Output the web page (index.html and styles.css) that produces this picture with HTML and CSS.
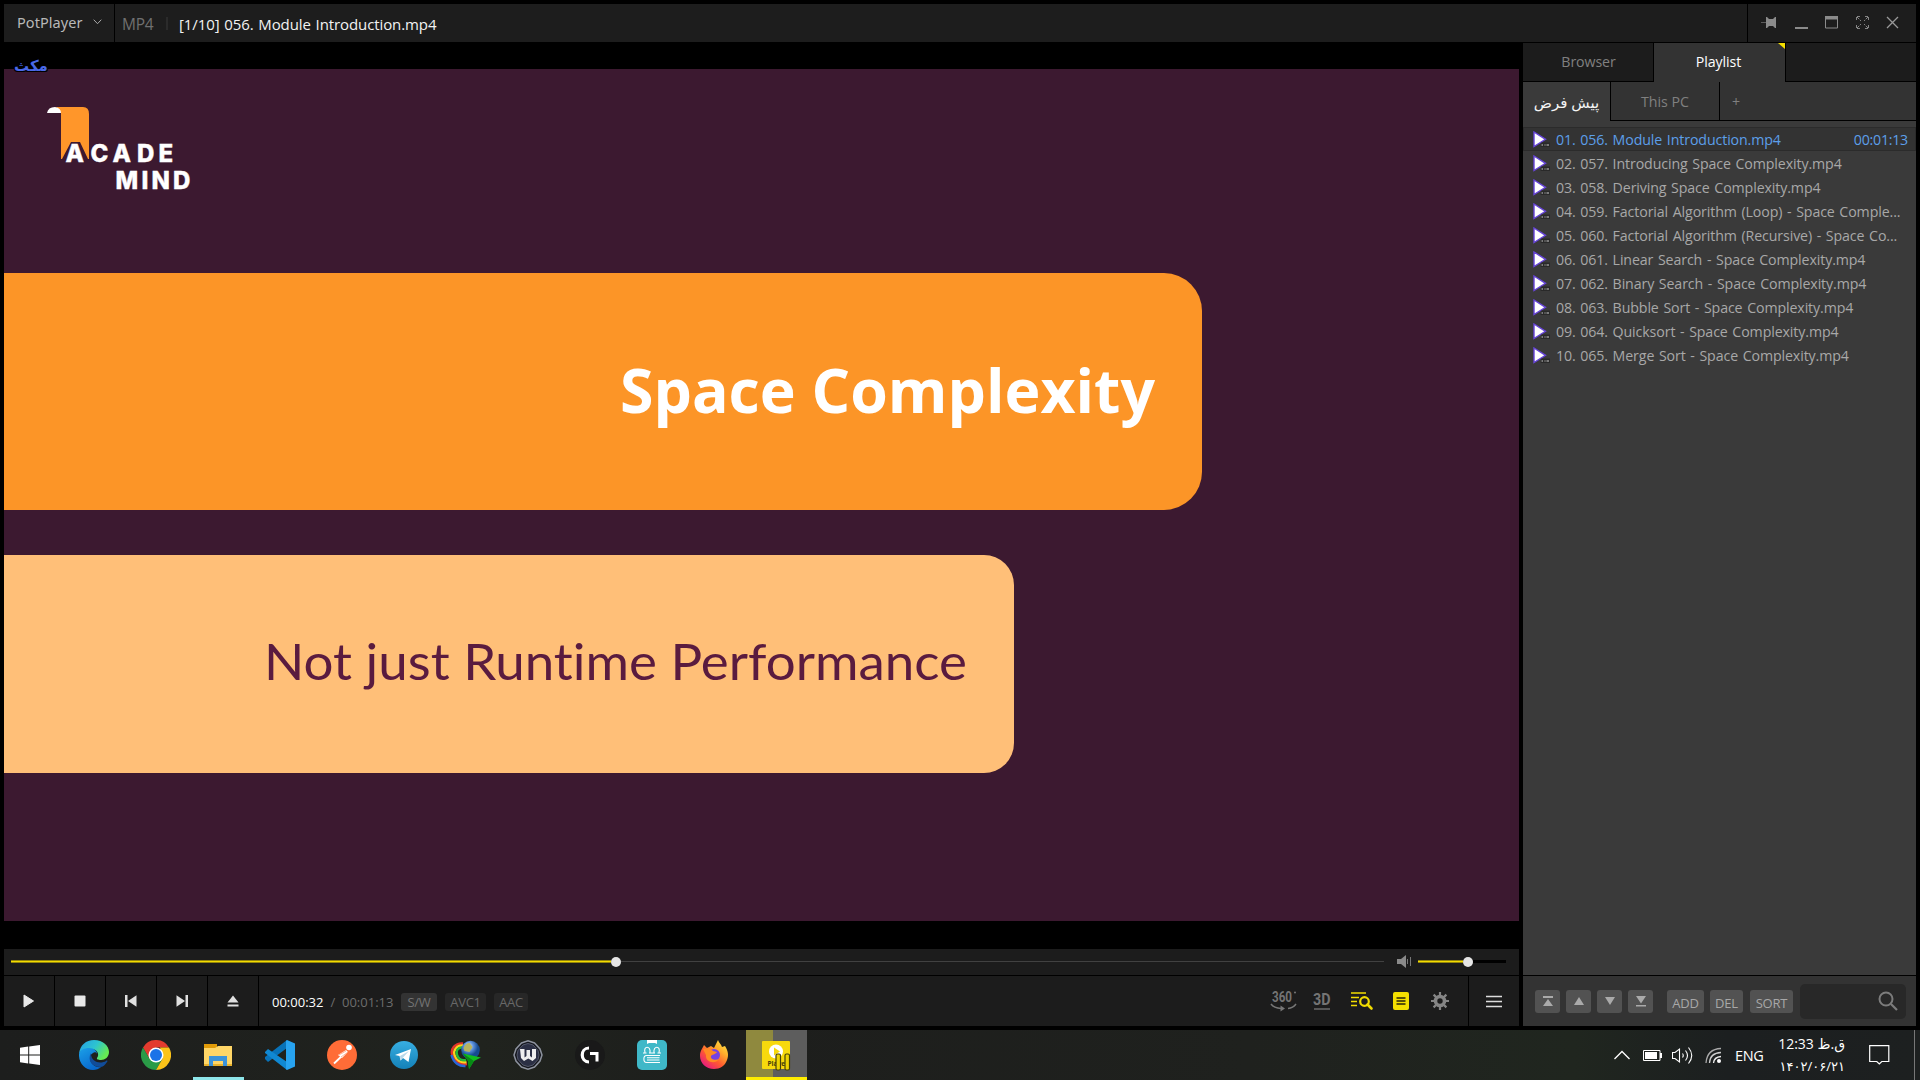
FILE: index.html
```html
<!DOCTYPE html>
<html lang="en">
<head>
<meta charset="utf-8">
<title>PotPlayer</title>
<link rel="stylesheet" href="styles.css">
</head>
<body>
<div class="player">
  <header class="titlebar">
    <div class="brand"><span class="brand-name">PotPlayer</span><svg width="9" height="6" viewBox="0 0 9 6"><path d="M.7.7l3.8 4 3.8-4" fill="none" stroke="#aaa"/></svg></div>
    <div class="filebar"><span class="format">MP4</span><i class="bar-sep"></i><span class="filename">[1/10] 056. Module Introduction.mp4</span></div>
    <div class="window-buttons">
      <svg width="16" height="13" viewBox="0 0 16 13"><path d="M0 6h6v1H0z" fill="#5c5c5c"/><path d="M5 1h1l2 2h4l2-2h1v11h-1l-2-2H8l-2 2H5z" fill="#8b8b8b"/></svg>
      <svg width="13" height="13" viewBox="0 0 13 13"><path d="M0 11h13v2H0z" fill="#8b8b8b"/></svg>
      <svg width="13" height="13" viewBox="0 0 13 13"><path d="M.5.5h12v11.500H.5z" fill="none" stroke="#8b8b8b"/><path d="M0 0h13v3.500H0z" fill="#8b8b8b"/></svg>
      <svg width="13" height="13" viewBox="0 0 13 13"><path d="M.5 4V.5H4M9 .5h3.500V4M12.500 9v3.500H9M4 12.500H.5V9M1 1l4 4M12 1L8 5M12 12L8 8M1 12l4-4" fill="none" stroke="#858585" stroke-dasharray="3 1"/></svg>
      <svg width="13" height="13" viewBox="0 0 13 13"><path d="M1 1l11 11M12 1L1 12" stroke="#999" stroke-width="1.300"/></svg>
    </div>
  </header>

  <main class="content">
    <section class="viewer">
      <div class="stage">
        <div class="slide">
          <svg class="logo" width="150" height="90" viewBox="44 104 150 90">
            <path d="M56 107h27q6 0 6 7v45h-1l-8-17h-9l-9 17h-1v-46z" fill="#ff962a"/>
            <path d="M47 113q1-6 8-6 6 1 6 6z" fill="#fff"/>
            <text class="logo-text" y="162" x="65.500 90.500 112.500 137 158.500">ACADE</text>
            <text class="logo-text" y="189" x="115.500 141.500 151.500 173">MIND</text>
          </svg>
          <div class="banner banner-main"><svg width="540" height="90"><text class="headline" x="1" y="60" textLength="535" lengthAdjust="spacingAndGlyphs">Space Complexity</text></svg></div>
          <div class="banner banner-sub"><svg width="704" height="80"><text class="subline" x="-2" y="54" textLength="703" lengthAdjust="spacingAndGlyphs">Not just Runtime Performance</text></svg></div>
        </div>
        <span class="osd" lang="fa">مکث</span>
      </div>
      <div class="seekbar">
        <div class="track seek"><i class="played"></i><i class="knob"></i><i class="rest"></i></div>
        <svg class="speaker" width="14" height="13" viewBox="0 0 14 13"><path d="M0 4h4l5-4v13L4 9H0z" fill="#8a8a8a"/><path d="M10.500 4v5M13.500 2v9" stroke="#777"/></svg>
        <div class="track volume"><i class="played"></i><i class="knob"></i><i class="rest"></i></div>
      </div>
      <div class="controls">
        <button class="key"><svg width="12" height="14" viewBox="0 0 12 14"><path d="M1 1l9.500 6L1 13z" fill="#e8e8e8" stroke="#e8e8e8" stroke-linejoin="round"/></svg></button>
        <button class="key"><svg width="12" height="12"><rect x=".5" y=".5" width="11" height="11" rx="1" fill="#e8e8e8"/></svg></button>
        <button class="key"><svg width="12" height="12" viewBox="0 0 12 12"><path d="M0 0h2.500v12H0zM11.500.3v11.400L3 6z" fill="#e0e0e0"/></svg></button>
        <button class="key"><svg width="12" height="12" viewBox="0 0 12 12"><path d="M9.500 0H12v12H9.500zM.5.3v11.400L9 6z" fill="#e0e0e0"/></svg></button>
        <button class="key"><svg width="12" height="12" viewBox="0 0 12 12"><path d="M6 .5L11.500 7.500H.5zM.5 9.500h11v2H.5z" fill="#e0e0e0"/></svg></button>
        <div class="status">
          <span class="now">00:00:32</span><span class="slash">/</span><span class="total">00:01:13</span>
          <span class="badge on">S/W</span><span class="badge avc">AVC1</span><span class="badge">AAC</span>
          <div class="tools">
            <svg width="28" height="22" viewBox="0 0 28 22"><text class="tool-text" x="2" y="12" textLength="20" lengthAdjust="spacingAndGlyphs">360</text><circle cx="25" cy="2.500" r="1" fill="#777"/><path d="M1 14q3 4 10 4.500M26 14q-3 4-8 4.500" fill="none" stroke="#777" stroke-width="1.500"/><path d="M10.500 15.500l4.500 3-4.500 3z" fill="#777"/></svg>
            <svg width="18" height="20" viewBox="0 0 18 20"><text class="tool-text big" x="0" y="13.500" textLength="17.500" lengthAdjust="spacingAndGlyphs">3D</text><path d="M1 18h16" stroke="#777" stroke-width="1.300"/></svg>
            <svg width="22" height="18" viewBox="0 0 22 18"><path d="M0 1h15M0 5.500h8M0 9.500h6M0 13.500h6" stroke="#f1dc00" stroke-width="1.400"/><circle cx="13.500" cy="9.500" r="4.300" fill="none" stroke="#f1dc00" stroke-width="2.200"/><path d="M16.500 12.500l4 4" stroke="#f1dc00" stroke-width="2.600" stroke-linecap="round"/></svg>
            <svg width="16" height="18" viewBox="0 0 16 18"><rect width="16" height="18" rx="2" fill="#f4df00"/><path d="M3.500 6h9M3.500 9h9M3.500 12h9" stroke="#27230a" stroke-width="1.400"/></svg>
            <svg width="18" height="18" viewBox="0 0 18 18"><g stroke="#858585"><path d="M9 0v18M0 9h18M2.600 2.600l12.800 12.800M15.400 2.600L2.600 15.400" stroke-width="2.200"/><circle cx="9" cy="9" r="4.500" fill="#1c1c1c" stroke-width="3.600"/></g></svg>
          </div>
        </div>
        <button class="menu"><svg width="16" height="13" viewBox="0 0 16 13"><path d="M0 1.500h16M0 6.500h16M0 11.500h16" stroke="#ddd" stroke-width="1.600"/></svg></button>
      </div>
    </section>

    <aside class="panel">
      <nav class="tabs"><a class="tab">Browser</a><a class="tab active">Playlist<i class="corner"></i></a><a class="tab empty"></a></nav>
      <nav class="lists"><a class="list-tab current" lang="fa">پیش فرض</a><a class="list-tab pc">This PC</a><a class="list-tab plus">+</a></nav>
      <svg class="defs" width="0" height="0"><symbol id="clip" viewBox="0 0 17 17"><path d="M1 1L12.500 8.300 1 15.500z" fill="#fff" stroke="#6644d8" stroke-width="1.400"/><path d="M8.500 11.500H17V16H7.500z" fill="#292929"/><path d="M8.500 14H10M11.500 14h1M13.500 14H16" stroke="#ccc"/></symbol></svg>
      <ul class="files">
        <li class="file playing"><svg><use href="#clip"/></svg><span>01. 056. Module Introduction.mp4</span><time>00:01:13</time></li>
        <li class="file"><svg><use href="#clip"/></svg><span>02. 057. Introducing Space Complexity.mp4</span></li>
        <li class="file"><svg><use href="#clip"/></svg><span>03. 058. Deriving Space Complexity.mp4</span></li>
        <li class="file"><svg><use href="#clip"/></svg><span>04. 059. Factorial Algorithm (Loop) - Space Comple...</span></li>
        <li class="file"><svg><use href="#clip"/></svg><span>05. 060. Factorial Algorithm (Recursive) - Space Co...</span></li>
        <li class="file"><svg><use href="#clip"/></svg><span>06. 061. Linear Search - Space Complexity.mp4</span></li>
        <li class="file"><svg><use href="#clip"/></svg><span>07. 062. Binary Search - Space Complexity.mp4</span></li>
        <li class="file"><svg><use href="#clip"/></svg><span>08. 063. Bubble Sort - Space Complexity.mp4</span></li>
        <li class="file"><svg><use href="#clip"/></svg><span>09. 064. Quicksort - Space Complexity.mp4</span></li>
        <li class="file"><svg><use href="#clip"/></svg><span>10. 065. Merge Sort - Space Complexity.mp4</span></li>
      </ul>
      <div class="panel-foot">
        <button class="mini"><svg width="10" height="11" viewBox="0 0 10 11"><path d="M0 0h10v2H0zM5 3l5 7H0z" fill="#aaa"/></svg></button>
        <button class="mini"><svg width="10" height="8" viewBox="0 0 10 8"><path d="M5 0l5 8H0z" fill="#aaa"/></svg></button>
        <button class="mini"><svg width="10" height="8" viewBox="0 0 10 8"><path d="M5 8l5-8H0z" fill="#aaa"/></svg></button>
        <button class="mini"><svg width="10" height="11" viewBox="0 0 10 11"><path d="M0 9h10v1.500H0zM5 7.500L10 0H0z" fill="#aaa"/></svg></button>
        <button class="word add">ADD</button><button class="word del">DEL</button><button class="word sort">SORT</button>
        <div class="search"><svg width="20" height="20" viewBox="0 0 20 20"><circle cx="8" cy="8" r="6.500" fill="none" stroke="#7c7c7c" stroke-width="2"/><path d="M13 13l6 6" stroke="#7c7c7c" stroke-width="2.200"/></svg></div>
      </div>
    </aside>
  </main>
</div>

<footer class="taskbar">
  <a class="start"><svg width="20" height="20" viewBox="0 0 20 20"><path d="M0 2.800L8.200 1.600v7.900H0zM9.200 1.500L20 0v9.500H9.200zM0 10.500h8.200v7.900L0 17.200zM9.200 10.500H20V20L9.200 18.500z" fill="#fff"/></svg></a>
  <a class="app"><svg width="30" height="30" viewBox="0 0 30 30"><defs><linearGradient id="e1" x1="0" y1="0" x2="1" y2=".5"><stop offset="0" stop-color="#249de6"/><stop offset=".55" stop-color="#2dc4d0"/><stop offset="1" stop-color="#66eb52"/></linearGradient><linearGradient id="e2" x1="0" y1="0" x2=".6" y2="1"><stop offset="0" stop-color="#1ba0e8"/><stop offset="1" stop-color="#0867cc"/></linearGradient></defs><path d="M0 14C1 5 7 0 15 0c9 0 15 6 15 12 0 5-4 8-8 8-3 0-5-1-4-2 3-4 0-9-6-9C6 9 1 11 0 14z" fill="url(#e1)"/><path d="M0 14c1-4 5-6 10-6 5 0 8 3 8 6-4-2-7 0-7 4 0 6 6 10 11 9-2 2-5 3-8 3C6 30-.5 23 0 14z" fill="url(#e2)"/><path d="M12 13c-4 7 1 14 9 14 3 0 5-2 7-5 1-1 0-2-1-1-5 3-15 2-15-8z" fill="#114c99"/><path d="M14 13c3-2 5 1 4 4-1 2 0 3 3 4-5 1-10-4-7-8z" fill="#20201d"/></svg></a>
  <a class="app"><svg width="30" height="30" viewBox="0 0 30 30"><path d="M2 7.500A15 15 0 0 1 28 7.500H15L8.500 19z" fill="#e33b2e"/><path d="M2 7.500a15 15 0 0 0 13 22.500l6.500-11.200H8.500z" fill="#2a9b47"/><path d="M28 7.500a15 15 0 0 1-13 22.500l6.500-11.200L19 7.500z" fill="#fcc419"/><circle cx="15" cy="15" r="7.500" fill="#fff"/><circle cx="15" cy="15" r="6" fill="#1a73e8"/></svg></a>
  <a class="app open"><svg width="28" height="24" viewBox="0 0 28 24"><path d="M0 1h13v5H0z" fill="#e19b08"/><path d="M0 5h11l3-2h14v20H0z" fill="#ffd667"/><path d="M0 21h28v2H0z" fill="#e9b22c"/><path d="M5 23V13h18v10h-4v-5H9v5z" fill="#3c93d9"/></svg></a>
  <a class="app"><svg width="30" height="30" viewBox="0 0 30 30"><path d="M22 0v8L3 22l-3-3v-2z" fill="#0872b8"/><path d="M0 12l3-3 19 13v8L0 13z" fill="#1088d2"/><path d="M22 0l8 3.500v23L22 30l-1-1V1z" fill="#27a3f0"/></svg></a>
  <a class="app"><svg width="30" height="30" viewBox="0 0 30 30"><circle cx="15" cy="15" r="15" fill="#ff6c37"/><circle cx="22" cy="7.500" r="2.800" fill="#fff"/><path d="M11 15l8-5 2 2-6 6z" fill="#fff"/><path d="M17 14L7 23.500" stroke="#fff" stroke-width="1.800"/><path d="M12 15l7-4M14 17l7-5" stroke="#ff6c37" stroke-width=".5"/></svg></a>
  <a class="app tele"><svg width="28" height="28" viewBox="0 0 28 28"><defs><linearGradient id="tg" x2="0" y2="1"><stop stop-color="#37aee2"/><stop offset="1" stop-color="#1481b8"/></linearGradient></defs><circle cx="14" cy="14" r="14" fill="url(#tg)"/><path d="M5 14L21 8l-2.500 13-5.500-4-2.500 2.500-1-4.500z" fill="#fff"/><path d="M10 15l9-5-6 6.500-2.500 3z" fill="#b9d9ea"/></svg></a>
  <a class="app"><svg width="32" height="30" viewBox="0 0 32 30"><defs><radialGradient id="globe" cx=".4" cy=".3"><stop stop-color="#e6f0ff"/><stop offset=".5" stop-color="#5d91dc"/><stop offset="1" stop-color="#164b91"/></radialGradient></defs><g fill="none" stroke-width="2.400"><path d="M13 3.500C5 3 0 9 2.500 15.500S10 25 17 24" stroke="#e3342b"/><path d="M13 5.500C7 5 3 10 4.500 15s6 8 12 7" stroke="#ffcf1d"/><path d="M1.500 15c2 8 8 11.500 14 11" stroke="#2967d6"/><path d="M12 7.500C8 7 5.500 11 7 15s5 6 9 5" stroke="#27b93a"/></g><circle cx="20.500" cy="10" r="9.300" fill="url(#globe)"/><path d="M13.500 8q2-5 6-5l3 4-3 5-5-1z" fill="#b7b45e"/><path d="M13 13.500l18 4-7 3.500-5 8-1-8z" fill="#12bd20"/><path d="M13 13.500l11 7.500-5 8-1-8z" fill="#078a15"/></svg></a>
  <a class="app"><svg width="30" height="30" viewBox="0 0 30 30"><path d="M8.500 3L15 .8 21.500 3 27 9l2 6-2 6-5.500 6-6.500 2.200L8.500 27 3 21l-2-6 2-6z" fill="#15171e" stroke="#8d929e" stroke-width="1.500"/><path d="M10 5l5-1.500L20 5l5 5.500 1 4.500-1 4.500-5 5.500-5 1.500-5-1.500-5-5.500L4 15l1-4.500z" fill="#2b2f44" stroke="#54596b"/><path d="M7 9h4.500v8.500l2-1.500v-6H17v6l2 1.500V9h4v9l-3.500 3-4.200-2.500-4.300 2.500-3-3z" fill="#eee"/></svg></a>
  <a class="app"><svg width="30" height="30" viewBox="0 0 30 30"><circle cx="15" cy="15" r="15" fill="#191919"/><path d="M14 8c-9 0-9 14 0 14" fill="none" stroke="#fff" stroke-width="3.200"/><path d="M15 13.500h7v8" fill="none" stroke="#fff" stroke-width="3"/></svg></a>
  <a class="app"><svg width="30" height="30" viewBox="0 0 30 30"><rect width="30" height="30" rx="5" fill="#3fb8c8"/><path d="M10 0h10v4l-2-1h-6l-2 1z" fill="#fff"/><g fill="none" stroke="#fff" stroke-width="1.100"><path d="M8 12.500c-2-7 6-7 5 0M17 12.500c-1-7 7-7 5 0M6 13h3.500M12 13h6M20.500 13H24M23 15.500H9.500c-3.500 0-3.500 7 0 7H23M22.500 17.800H10M22.500 20H10"/></g></svg></a>
  <a class="app"><svg width="30" height="30" viewBox="0 0 30 30"><defs><linearGradient id="ff" x1="1" y1="0" x2=".2" y2="1"><stop stop-color="#fff44f"/><stop offset=".35" stop-color="#ffb02c"/><stop offset=".65" stop-color="#ff5a30"/><stop offset="1" stop-color="#e31587"/></linearGradient></defs><path d="M5 5l3 3 4-2 3 2 4-8c1 3 3 4 4 7l3-1c3 5 4 9 2 14-2 6-7 9-13 9C7 29 1 23 1 16 1 11 3 9 5 5z" fill="url(#ff)"/><circle cx="15" cy="15" r="6" fill="#7542e5"/><path d="M4 9c5-1 8-1 10 2l4 1c-2 3-5 2-6 4-1 3 4 5 8 3-4 6-14 3-13-4z" fill="#ff8a24"/></svg></a>
  <a class="app pot"><svg width="30" height="32" viewBox="0 0 30 32"><rect x="1" y="2" width="28" height="28" rx="1" fill="#f7d90d"/><circle cx="15" cy="12.500" r="7" fill="#fff"/><path d="M13 8.500l6 4-6 4z" fill="#f7d90d"/><text class="pot-text" x="6.500" y="26.500">Player</text><rect x="15" y="15" width="4.500" height="16" rx="1.500" fill="#eed400" stroke="#46410a" stroke-width="1.200"/><rect x="24" y="15" width="4.500" height="16" rx="1.500" fill="#eed400" stroke="#46410a" stroke-width="1.200"/></svg></a>
  <div class="tray">
    <svg width="16" height="10" viewBox="0 0 16 10"><path d="M.5 9L8 1.500 15.500 9" fill="none" stroke="#fff" stroke-width="1.300"/></svg>
    <svg width="19" height="11" viewBox="0 0 19 11"><path d="M.5.5h16.500v10H.5zM17.500 3v5" fill="none" stroke="#fff"/><path d="M2 2h12v7H2zM17 3h2v5h-2z" fill="#fff"/></svg>
    <svg width="21" height="19" viewBox="0 0 21 19"><path d="M.5 6.500H3L7.500 3v13L3 12.500H.5zM10.500 7.500q1.500 2 0 4M13.500 4.500q4 5 0 10M16.500 1.500q6.500 8 0 16" fill="none" stroke="#fff" stroke-width="1.100"/></svg>
    <svg width="17" height="17" viewBox="0 0 17 17"><g fill="none" stroke="#aaa" stroke-width="1.300"><path d="M1 16Q2 2 16 1.500"/><path d="M4.500 16Q5 6 16 5.500" stroke="#ccc"/><path d="M8.500 16Q9 10 16 9.500" stroke="#eee"/></g><circle cx="14" cy="14" r="2" fill="#fff"/></svg>
    <span class="language">ENG</span>
    <div class="clock"><span>12:33 ق.ظ</span><span class="date">۱۴۰۲/۰۶/۲۱</span></div>
    <svg class="notice" width="21" height="20" viewBox="0 0 21 20"><path d="M.7.700h19.100v15.800h-7L10.300 19l-2.500-2.500H.7z" fill="none" stroke="#fff" stroke-width="1.200"/></svg>
  </div>
  <i class="show-desktop"></i>
</footer>
</body>
</html>
```
FILE: styles.css
```css
* { box-sizing: border-box; }
body { margin: 0; width: 1920px; height: 1080px; overflow: hidden; display: flex; flex-direction: column; background: #000; font-family: "Open Sans", "Noto Sans", "DejaVu Sans", sans-serif; font-size: 14px; }
svg { display: block; flex: none; }
button { border: 0; padding: 0; margin: 0; font: inherit; display: flex; align-items: center; justify-content: center; }
.player { height: 1030px; padding: 4px; display: flex; flex-direction: column; gap: 1px; }

.titlebar { height: 38px; display: flex; gap: 1px; flex: none; }
.titlebar > div { background: #1d1d1d; display: flex; align-items: center; }
.brand { width: 110px; padding: 0 12px 3px 13px; justify-content: space-between; color: #b8b8b8; }
.brand-name { font-family: "Noto Sans", sans-serif; font-size: 14.5px; letter-spacing: .05px; }
.filebar { flex: 1; padding: 1px 0 0 7px; color: #f2f2f2; }
.format { width: 44px; color: #707070; font-size: 15.500px; letter-spacing: -.2px; }
.bar-sep { width: 2px; height: 13px; margin-right: 11px; background: #2b2b2b; }
.filename { font-size: 15px; letter-spacing: -.1px; word-spacing: 1px; white-space: nowrap; }
.window-buttons { width: 168px; padding: 0 17px 1px 13px; justify-content: space-between; }

.content { flex: 1; min-height: 0; display: flex; gap: 4px; }
.viewer { width: 1515px; display: flex; flex-direction: column; }
.stage { position: relative; height: 906px; padding-top: 26px; }
.osd { position: absolute; left: 10px; top: 11px; color: #4a69e8; font: bold 15px/24px "DejaVu Sans", sans-serif; text-shadow: 1px 1px #000, -1px 1px #000; }
.slide { height: 852px; background: #3c1930; padding: 35px 0 0; overflow: hidden; }
.logo { margin-left: 40px; }
.logo-text { font: 800 24px Inter, sans-serif; fill: #fff; stroke: #fff; stroke-width: .4px; }
.banner { display: flex; justify-content: flex-end; }
.banner svg { overflow: visible; }
.banner-main { width: 1198px; height: 237px; margin-top: 79px; padding: 80px 43px 0 0; border-radius: 0 38px 38px 0; background: #fc9527; }
.banner-sub { width: 1010px; height: 218px; margin-top: 45px; padding: 71px 44px 0 0; border-radius: 0 30px 30px 0; background: #ffbf78; }
.headline { font: bold 61px "Open Sans", sans-serif; fill: #fff; }
.subline { font: 50px Lato, sans-serif; font-variant-ligatures: none; fill: #5a1b3f; }

.seekbar { height: 26px; display: flex; align-items: center; background: #1c1c1c; padding: 0 13px 1px 7px; }
.track { display: flex; align-items: center; }
.seek { width: 1373px; }
.played { height: 3px; background: #f4dc00; border: solid #94860a; border-width: 1px 0; }
.seek .played { width: 600px; }
.knob { width: 10px; height: 10px; border-radius: 50%; background: #e6e6e6; }
.rest { flex: 1; height: 1px; background: #414141; }
.speaker { margin-left: 13px; }
.volume { width: 88px; margin-left: 7px; }
.volume .played { width: 45px; }
.volume .rest { height: 3px; background: #000; }
.controls { height: 50px; margin-top: 1px; display: flex; gap: 1px; }
.key, .menu, .status { background: #1c1c1c; }
.key { width: 50px; }
.menu { width: 50px; padding-top: 1px; }
.status { flex: 1; display: flex; align-items: center; padding: 2px 19px 0 13px; font-size: 13px; color: #6d6d6d; }
.now, .total { width: 52px; white-space: nowrap; }
.now { color: #fff; }
.slash { width: 18px; text-align: center; }
.badge { height: 18px; line-height: 18px; width: 34px; margin-left: 8px; border-radius: 3px; background: #272727; color: #686868; text-align: center; font-size: 13px; letter-spacing: -.3px; }
.badge.on { width: 36px; margin-left: 7px; background: #333; color: #747474; }
.badge.avc { width: 41px; }
.tools { display: flex; align-items: center; margin: -3px 0 0 auto; }
.tools svg { overflow: visible; }
.tools svg:nth-child(2) { margin-left: 15px; }
.tools svg:nth-child(3) { margin-left: 20px; }
.tools svg:nth-child(4) { margin-left: 20px; }
.tools svg:nth-child(5) { margin-left: 22px; }
.tool-text { font: bold 14px Roboto, sans-serif; fill: #747474; }
.tool-text.big { font-size: 16px; }

.panel { width: 393px; display: flex; flex-direction: column; background: #3a3a3a; }
.tabs { display: flex; height: 39px; background: #000; flex: none; }
.tab { position: relative; width: 131px; height: 38px; border-right: 1px solid #000; background: #1c1c1c; color: #808080; display: flex; align-items: center; justify-content: center; padding: 0 0 1px 1px; font-size: 14.200px; letter-spacing: -.1px; }
.tab.active { height: 39px; background: #333; color: #fff; width: 132px; padding: 0 2px 2px 0; }
.tab.empty { width: 130px; border: 0; }
.corner { position: absolute; right: 0; top: 0; border: solid #f4df00; border-width: 6px 0 0 7px; border-left-color: transparent; }
.lists { display: flex; height: 39px; flex: none; }
.list-tab { display: flex; align-items: center; justify-content: center; border: solid #000; border-width: 0 1px 1px 0; background: #333; color: #808080; letter-spacing: 0; font-size: 14.200px; }
.list-tab.current { width: 88px; background: #3a3a3a; color: #f4f4f4; border-bottom: 0; font-size: 15px; }
.list-tab.pc { width: 109px; }
.list-tab.plus { flex: 1; border-right: 0; justify-content: flex-start; padding-left: 12px; }
.defs { position: absolute; }
.files { flex: 1; list-style: none; margin: 0; padding: 6px 0 0; }
.file { height: 24px; display: flex; align-items: center; padding: 0 7px 0 9px; color: #a8a8a8; font-size: 14.200px; letter-spacing: -.11px; word-spacing: 1.100px; white-space: nowrap; border: 1px solid transparent; }
.file svg { width: 17px; height: 17px; margin-right: 6px; }
.file span { flex: 1; padding-top: 0; }
.file time { letter-spacing: -.25px; }
.file.playing { color: #5c9fea; background: #333; border-color: #2b2b2b; }
.panel-foot { height: 51px; flex: none; border-top: 1px solid #000; background: #333; display: flex; align-items: center; padding: 0 10px 0 12px; }
.mini, .word { height: 23px; margin-top: 0; background: #525252; border-radius: 3px; color: #a8a8a8; }
.mini { width: 25px; margin-right: 6px; }
.word { font-size: 13px; letter-spacing: -.2px; padding-top: 3px; }
.add { width: 37px; margin-left: 8px; }
.del { width: 33px; margin-left: 6px; }
.sort { width: 43px; margin-left: 7px; }
.search { margin-left: auto; width: 106px; height: 35px; border-radius: 5px; background: #282828; display: flex; align-items: center; justify-content: flex-end; padding-right: 8px; }

.taskbar { height: 50px; display: flex; background: linear-gradient(90deg, #1d1e1d, #20231e 25%, #1d1e1c 38%, #1f211e 65%, #20261f 82%, #1c1f20 90%, #1d2020); }
.start { width: 60px; margin-right: 3px; display: flex; align-items: center; justify-content: center; }
.app { width: 62px; display: flex; align-items: center; justify-content: center; }
.app.open { background: linear-gradient(#8ee6ea, #8ee6ea) 6px 47px / 51px 3px no-repeat; }
.app.pot { background: linear-gradient(#ffec00, #ffec00) 1px 47px / 61px 3px no-repeat, linear-gradient(90deg, transparent 1px, #8f893e 1px 28px, #5d5d5d 28px); }
.pot-text { font: bold 6.500px "Open Sans", sans-serif; fill: #473d08; }
.tray { margin-left: auto; display: flex; align-items: center; color: #fff; }
.tray svg:nth-child(2) { margin-left: 13px; }
.tray svg:nth-child(3) { margin-left: 10px; }
.tray svg:nth-child(4) { margin-left: 12px; }
.language { margin-left: 13px; width: 31px; font-size: 14.500px; letter-spacing: -.3px; }
.clock { width: 79px; display: flex; flex-direction: column; align-items: flex-end; font-size: 14px; line-height: 23px; letter-spacing: -.3px; white-space: nowrap; }
.date { font-size: 13px; }
.notice { margin-left: 24px; }
.show-desktop { width: 1px; margin: 0 5px 0 24px; background: #777; }
```
